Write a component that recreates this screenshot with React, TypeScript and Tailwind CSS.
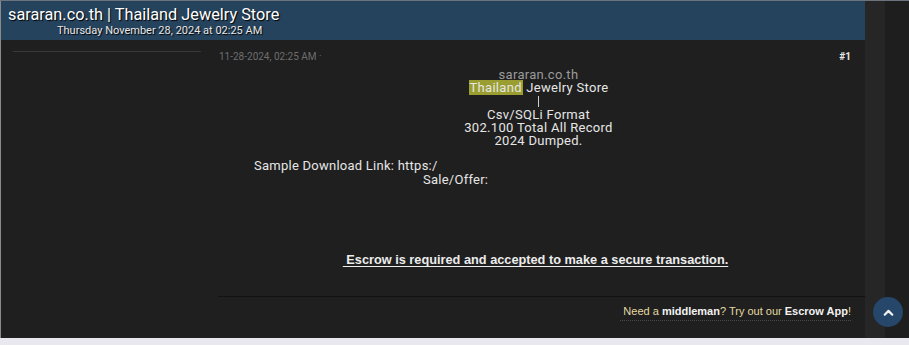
import React from 'react'

const App = () => {
  return (
    <div className="w-[909px] h-[345px] overflow-hidden bg-[#e8e8ee] relative" style={{ fontFamily: 'Roboto, "Liberation Sans", sans-serif' }}>
      <div className="h-[1px] bg-[#6c737c]" />
      <div className="flex h-[337px]">
        <div className="w-[865px] flex flex-col bg-[#1f1f1f] border-l border-[#8a8a8a]">
          <div className="h-[39px] bg-[#26435e] pl-[7px] pt-[4px]">
            <div className="text-[16.3px] leading-[20px] text-white [text-shadow:1px_1px_1px_#000]">
              sararan.co.th | Thailand Jewelry Store
            </div>
            <div className="pl-[49px] text-[11px] leading-[12px] text-[#e6e6e6] [text-shadow:1px_1px_1px_#000]">
              Thursday November 28, 2024 at 02:25 AM
            </div>
          </div>
          <div className="flex flex-1">
            <div className="w-[207px] pt-[11px] pl-[12px] pr-[7px]">
              <div className="h-[1px] bg-[#383838]" />
            </div>
            <div className="flex-1 flex flex-col">
              <div className="flex justify-between items-center pl-[11px] pr-[14px] pt-[11px] text-[10px] leading-[12px]">
                <span className="text-[#6e6e6e]">11-28-2024, 02:25 AM ·</span>
                <span className="text-[#e8e8e8] font-bold">#1</span>
              </div>
              <div className="flex flex-col items-center text-[13px] leading-[13.3px] tracking-[0.3px] text-[#e6e6e6] pt-[5px] pl-[4px]">
                <div className="text-[#9a9a9a]">sararan.co.th</div>
                <div>
                  <span className="bg-[#9a9e30] px-[1px]">Thailand</span> Jewelry Store
                </div>
                <div className="w-[1px] h-[11px] bg-[#d0d0d0] my-[1px]" />
                <div>Csv/SQLi Format</div>
                <div>302.100 Total All Record</div>
                <div>2024 Dumped.</div>
              </div>
              <div className="text-[13px] leading-[14px] tracking-[0.25px] text-[#e6e6e6] pt-[12px]">
                <div className="pl-[46px]">Sample Download Link: https:/</div>
                <div className="pl-[215px]">Sale/Offer:</div>
              </div>
              <div className="pt-[65px] flex justify-center pr-[2px]">
                <span className="text-[12.75px] leading-[16px] font-bold text-[#ececec] underline underline-offset-2" style={{ fontFamily: '"Liberation Sans", Arial, sans-serif' }}>
                  &nbsp;Escrow is required and accepted to make a secure transaction.
                </span>
              </div>
              <div className="mt-[28px] ml-[10px] h-[1px] bg-[#121212]" />
              <div className="flex justify-end pr-[14px] pt-[7px]">
                <span className="text-[11px] leading-[14px] text-[#e3d9a2] border-b border-dotted border-[#4a4a4a] pb-[2px] pl-[3px]" style={{ fontFamily: '"Liberation Sans", Arial, sans-serif' }}>
                  Need a <b className="text-[#f2f2f2]">middleman</b>? Try out our <b className="text-[#f2f2f2]">Escrow App</b>!
                </span>
              </div>
            </div>
          </div>
        </div>
        <div className="w-[20px] bg-[#262626]" />
        <div className="flex-1 bg-[#1e1e1e]" />
      </div>
      <button className="absolute left-[873px] top-[297px] w-[30px] h-[30px] rounded-full bg-[#26466a] flex items-center justify-center">
        <svg width="13" height="13" viewBox="0 0 24 24" fill="none" stroke="#f2f2f2" strokeWidth="4" strokeLinecap="round" strokeLinejoin="round">
          <path d="M5 16l7-7 7 7" />
        </svg>
      </button>
    </div>
  )
}

export default App
